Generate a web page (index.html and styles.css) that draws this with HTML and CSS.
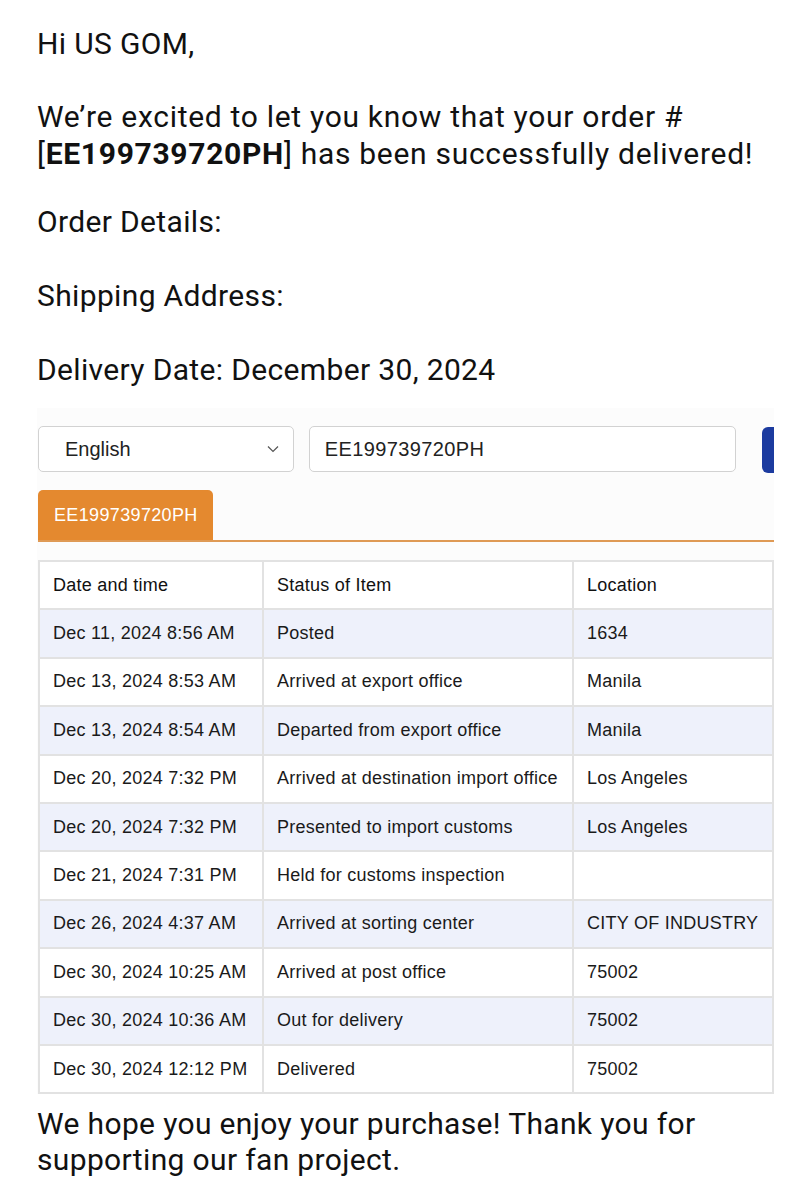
FILE: index.html
```html
<!DOCTYPE html>
<html>
<head>
<meta charset="utf-8">
<link rel="stylesheet" href="styles.css">
</head>
<body>
<div class="mail">
  <p class="p p-hi">Hi US GOM,</p>
  <p class="p p-intro">We’re excited to let you know that your order #<br>[<b>EE199739720PH</b>] has been successfully delivered!</p>
  <p class="p p-first">Order Details:</p>
  <p class="p p-gap">Shipping Address:</p>
  <p class="p p-gap">Delivery Date: December 30, 2024</p>

  <div class="shot">
    <div class="controls">
      <div class="select">
        <span>English</span>
        <svg class="chev" width="12" height="8" viewBox="0 0 12 8"><path d="M1 1.5 L6 6.5 L11 1.5" fill="none" stroke="#555" stroke-width="1.2"/></svg>
      </div>
      <div class="input">EE199739720PH</div>
      <div class="btn"></div>
    </div>
    <div class="tabs">
      <div class="tab">EE199739720PH</div>
    </div>
    <table class="track">
      <thead>
        <tr><th class="c1">Date and time</th><th class="c2">Status of Item</th><th class="c3">Location</th></tr>
      </thead>
      <tbody>
        <tr><td>Dec 11, 2024 8:56 AM</td><td>Posted</td><td>1634</td></tr>
        <tr><td>Dec 13, 2024 8:53 AM</td><td>Arrived at export office</td><td>Manila</td></tr>
        <tr><td>Dec 13, 2024 8:54 AM</td><td>Departed from export office</td><td>Manila</td></tr>
        <tr><td>Dec 20, 2024 7:32 PM</td><td>Arrived at destination import office</td><td>Los Angeles</td></tr>
        <tr><td>Dec 20, 2024 7:32 PM</td><td>Presented to import customs</td><td>Los Angeles</td></tr>
        <tr><td>Dec 21, 2024 7:31 PM</td><td>Held for customs inspection</td><td></td></tr>
        <tr><td>Dec 26, 2024 4:37 AM</td><td>Arrived at sorting center</td><td>CITY OF INDUSTRY</td></tr>
        <tr><td>Dec 30, 2024 10:25 AM</td><td>Arrived at post office</td><td>75002</td></tr>
        <tr><td>Dec 30, 2024 10:36 AM</td><td>Out for delivery</td><td>75002</td></tr>
        <tr><td>Dec 30, 2024 12:12 PM</td><td>Delivered</td><td>75002</td></tr>
      </tbody>
    </table>
  </div>

  <p class="p p-end">We hope you enjoy your purchase! Thank you for<br>supporting our fan project.</p>
</div>
</body>
</html>
```

FILE: styles.css
```css
html, body {
  margin: 0;
  padding: 0;
  background: #ffffff;
}
.mail {
  padding: 25px 0 0 37px;
  font-family: Roboto, "Noto Sans", sans-serif;
  color: #111;
}
.p {
  margin: 0;
  font-size: 30px;
  line-height: 37px;
  letter-spacing: 0.35px;
}
.p b { font-weight: 700; }
.p-intro { margin-top: 36px; letter-spacing: 0.7px; }
.p-first { margin-top: 31px; }
.p-gap { margin-top: 37px; }

.shot {
  margin-top: 20px;
  width: 737px;
  background: #fcfcfc;
  padding-top: 18px;
  font-family: "Liberation Sans", Arial, sans-serif;
}
.controls {
  display: flex;
  align-items: flex-start;
  gap: 15px;
}
.select, .input {
  box-sizing: border-box;
  height: 46px;
  border: 1.5px solid #d2d2d2;
  border-radius: 5px;
  background: #fff;
  display: flex;
  align-items: center;
  font-size: 20px;
  color: #222;
}
.select {
  width: 256px;
  margin-left: 1px;
  padding: 0 14px 0 26px;
  justify-content: space-between;
}
.input {
  width: 428px;
  padding-left: 15px;
  letter-spacing: 0.4px;
}
.btn {
  margin-left: 11px;
  width: 12px;
  height: 46px;
  margin-top: 1px;
  background: #1c3b9f;
  border-radius: 6px 0 0 6px;
}
.tabs {
  margin-top: 17px;
  margin-left: 1px;
  border-bottom: 2px solid #df9a55;
  display: flex;
}
.tab {
  width: 175px;
  height: 50px;
  box-sizing: border-box;
  background: #e4892f;
  color: #fff;
  border-radius: 5px 5px 0 0;
  font-size: 18px;
  letter-spacing: 0.35px;
  padding-left: 16px;
  display: flex;
  align-items: center;
}
.track {
  margin-top: 18px;
  margin-left: 1px;
  width: 736px;
  table-layout: fixed;
  border-collapse: collapse;
  font-size: 18px;
  letter-spacing: 0.25px;
  color: #1a1a1a;
  background: #fff;
}
.track th, .track td {
  border: 2px solid #e2e2e2;
  height: 48.4px;
  box-sizing: border-box;
  padding: 0 13px;
  text-align: left;
  white-space: nowrap;
  overflow: hidden;
}
.track th {
  font-weight: 400;
  color: #111;
}
.c1 { width: 224px; }
.c2 { width: 310px; }
.track tbody tr:nth-child(odd) td { background: #eef1fb; }

.p-end { margin-top: 12px; line-height: 36px; }
```
